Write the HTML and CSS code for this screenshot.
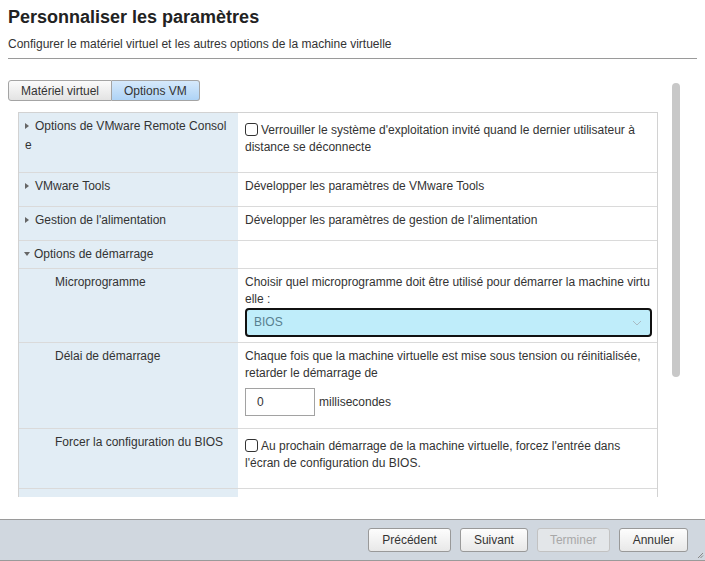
FILE: index.html
```html
<!DOCTYPE html>
<html lang="fr">
<head>
    <meta charset="UTF-8">
    <meta name="viewport" content="width=device-width, initial-scale=1.0">
    <title>Personnaliser les paramètres</title>
    <link rel="stylesheet" href="styles.css">
</head>
<body>
    <div class="head">
        <h1>Personnaliser les paramètres</h1>
        <p class="sub">Configurer le matériel virtuel et les autres options de la machine virtuelle</p>
    </div>

    <div class="pane">
        <div class="tabs">
            <button class="tab">Matériel virtuel</button>
            <button class="tab active">Options VM</button>
        </div>

        <div class="grid">
            <div class="key"><span class="caret"></span>Options de VMware Remote Consol<wbr>e</div>
            <div class="val">
                <label class="check"><input type="checkbox">Verrouiller le système d'exploitation invité quand le dernier utilisateur à distance se déconnecte</label>
            </div>

            <div class="key"><span class="caret"></span>VMware Tools</div>
            <div class="val">Développer les paramètres de VMware Tools</div>

            <div class="key"><span class="caret"></span>Gestion de l'alimentation</div>
            <div class="val">Développer les paramètres de gestion de l'alimentation</div>

            <div class="key"><span class="caret open"></span>Options de démarrage</div>
            <div class="val empty"></div>

            <div class="key sub-key">Microprogramme</div>
            <div class="val with-select">
                Choisir quel microprogramme doit être utilisé pour démarrer la machine virtu<wbr>elle :
                <div class="select">
                    <span>BIOS</span>
                    <svg width="10" height="6" viewBox="0 0 10 6"><path d="M1 1l4 4 4-4" fill="none" stroke="#a9bcc4" stroke-width="1"/></svg>
                </div>
            </div>

            <div class="key sub-key">Délai de démarrage</div>
            <div class="val">
                Chaque fois que la machine virtuelle est mise sous tension ou réinitialisée, retarder le démarrage de
                <div class="amount"><input class="num" type="text" value="0"><span>millisecondes</span></div>
            </div>

            <div class="key sub-key">Forcer la configuration du BIOS</div>
            <div class="val">
                <label class="check"><input type="checkbox">Au prochain démarrage de la machine virtuelle, forcez l'entrée dans l'écran de configuration du BIOS.</label>
            </div>

            <div class="key sub-key filler"></div>
            <div class="val filler"></div>
        </div>

        <!-- scroll thumb of the pane -->
        <div class="thumb"></div>
    </div>

    <div class="foot">
        <button class="btn">Précédent</button>
        <button class="btn">Suivant</button>
        <button class="btn" disabled>Terminer</button>
        <button class="btn">Annuler</button>
        <svg class="grip" width="7" height="7" viewBox="0 0 7 7">
            <path d="M6 1L1 6M6 3.5L3.5 6" stroke="#888" stroke-width="1"/>
        </svg>
    </div>
</body>
</html>
```

FILE: styles.css
```css
* {
    box-sizing: border-box;
}
html, body {
    margin: 0;
}
body {
    width: 705px;
    height: 561px;
    overflow: hidden;
    display: flex;
    flex-direction: column;
    font-family: "Liberation Sans", Arial, sans-serif;
    font-size: 12px;
    color: #333;
    background: #fff;
}

/* header */
.head {
    margin: 0 8px;
    padding-top: 6px;
    padding-bottom: 6px;
    border-bottom: 1px solid #9a9a9a;
}
.head h1 {
    margin: 0;
    font-size: 18px;
    line-height: 22px;
    font-weight: bold;
    color: #222;
}
.head .sub {
    margin: 8px 0 0;
    line-height: 16px;
}

/* body of the wizard, cut at the bottom */
.pane {
    position: relative;
    flex: none;
    margin: 21px 22px 0 8px;
    height: 417px;
    overflow: hidden;
}
.thumb {
    position: absolute;
    top: 3px;
    right: 3px;
    width: 8px;
    height: 294px;
    border-radius: 4px;
    background: #c8c8c8;
}

.tabs {
    display: flex;
}
.tab {
    height: 21px;
    padding: 0 12px;
    font: inherit;
    color: #333;
    border: 1px solid #a4a4a4;
    background: linear-gradient(#fbfbfb, #e3e3e3);
}
.tab:first-child {
    border-radius: 3px 0 0 3px;
}
.tab:last-child {
    border-left: none;
    border-radius: 0 3px 3px 0;
}
.tab.active {
    background: linear-gradient(#d6e9fb, #aed3f6);
}

/* settings table */
.grid {
    display: grid;
    grid-template-columns: 219px 1fr;
    width: 640px;
    margin: 11px 0 0 10px;
    border: 1px solid #d2d2d2;
    border-bottom: none;
}
.key, .val {
    border-bottom: 1px solid #dadada;
}
.key {
    padding: 4px 8px 4px 6px;
    line-height: 19px;
    background: #e2edf5;
}
.sub-key {
    padding-left: 36px;
}
.val {
    padding: 5px 5px 11px 7px;
    line-height: 17px;
}
.val.empty {
    padding: 0;
}
.val.with-select {
    padding-bottom: 5px;
}
.filler {
    min-height: 34px;
}

.caret {
    display: inline-block;
    width: 0;
    height: 0;
    margin-right: 6px;
    vertical-align: 1px;
    border-style: solid;
    border-color: transparent transparent transparent #666;
    border-width: 3.5px 0 3.5px 4px;
}
.caret.open {
    margin-left: -1px;
    margin-right: 4px;
    vertical-align: 2px;
    border-color: #666 transparent transparent transparent;
    border-width: 4px 3.5px 0 3.5px;
}

.check {
    display: block;
    margin: 4px 0 5px;
}
.check input {
    appearance: none;
    width: 13px;
    height: 13px;
    margin: 0 3px 0 0;
    vertical-align: -2px;
    border: 1px solid #333;
    border-radius: 3px;
    background: #fff;
}

.select {
    display: flex;
    align-items: center;
    justify-content: space-between;
    height: 29px;
    padding: 0 8px 0 7px;
    border: 2px solid #111;
    border-radius: 4px;
    background: #bfedfa;
    color: #58808f;
}

.amount {
    display: flex;
    align-items: center;
    gap: 4px;
    margin: 6px 0 1px;
}
.num {
    width: 70px;
    height: 28px;
    padding: 0 11px;
    font: inherit;
    color: #333;
    border: 1px solid #a2a2a2;
    outline: none;
}

/* footer buttons */
.foot {
    position: relative;
    display: flex;
    justify-content: flex-end;
    align-items: center;
    gap: 9px;
    height: 42px;
    margin-top: 22px;
    padding-right: 17px;
    background: #d0d7df;
    border-top: 1px solid #9a9a9a;
    border-bottom: 1px solid #9a9a9a;
}
.btn {
    height: 24px;
    padding: 0 13px;
    font: inherit;
    color: #333;
    border: 1px solid #999;
    border-radius: 3px;
    background: linear-gradient(#fdfdfd, #e8e8e8);
}
.btn:disabled {
    padding: 0 12px;
    color: #a8a8a8;
    border-color: #c2c2c2;
    background: #e3e6e9;
}
.grip {
    position: absolute;
    right: 1px;
    bottom: 1px;
}
```
